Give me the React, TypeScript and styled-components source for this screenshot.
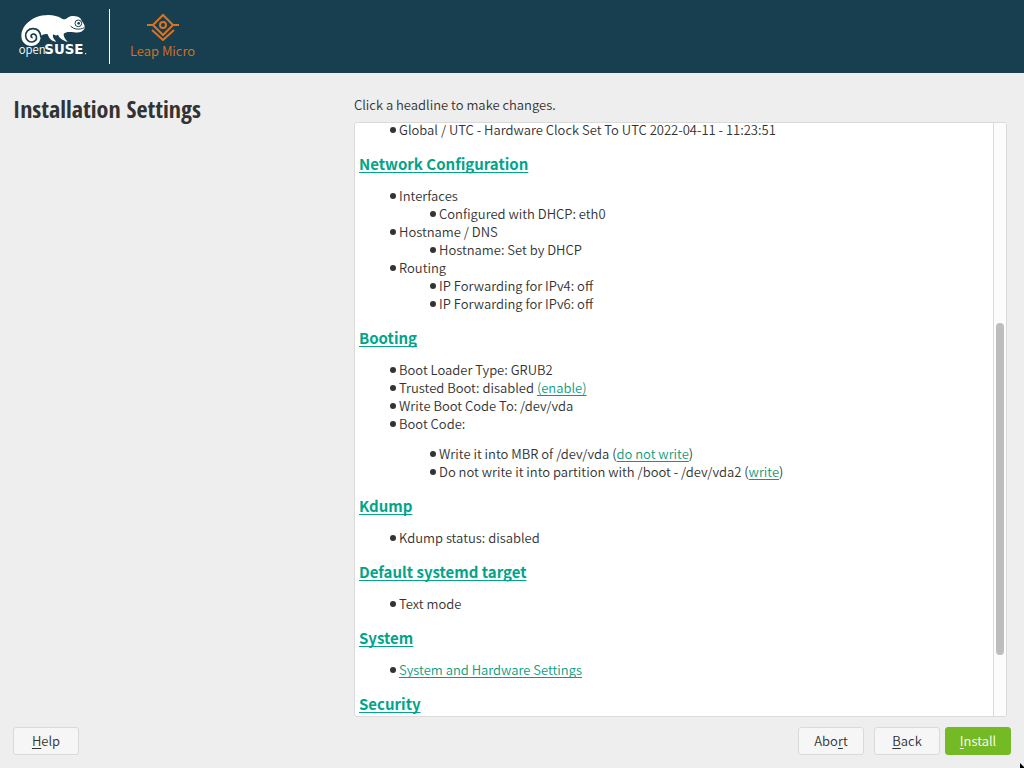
import React from "react";
import styled, { createGlobalStyle } from "styled-components";

const Global = createGlobalStyle`
  * { box-sizing: border-box; }
  body {
    margin: 0;
    background: #eeeeee;
    color: #333333;
    font-family: "Source Sans Pro", "Noto Sans CJK SC", sans-serif;
    font-size: 13px;
    font-weight: 350;
    line-height: 18px;
  }
`;

const Page = styled.div`
  display: flex;
  flex-direction: column;
  height: 100vh;
`;

const Header = styled.header`
  display: flex;
  align-items: flex-start;
  flex: none;
  gap: 20px;
  height: 73px;
  padding: 9px 18px;
  background: #173f4f;
`;

const SuseLogo = styled.svg`
  margin-top: 4px;
`;

const Divider = styled.div`
  width: 1px;
  height: 55px;
  background: #ffffff;
`;

const Product = styled.div`
  display: flex;
  flex-direction: column;
  align-items: center;
  gap: 1px;
  padding-top: 4px;
  color: #dd7220;
`;

const Main = styled.main`
  display: flex;
  flex: 1;
  min-height: 0;
  padding: 23px 17px 10px 13px;
`;

const Side = styled.div`
  flex: none;
  width: 341px;
`;

const Title = styled.h1`
  margin: 0;
  font-family: "Open Sans Condensed", "Noto Sans Condensed", "Roboto Condensed", "Liberation Sans Narrow", sans-serif;
  font-size: 24px;
  font-weight: 700;
  line-height: 26px;
`;

const Proposal = styled.section`
  display: flex;
  flex-direction: column;
  flex: 1;
  min-width: 0;
`;

const Hint = styled.p`
  margin: 0 0 8px;
`;

const Panel = styled.div`
  display: flex;
  flex: 1;
  min-height: 0;
  overflow: hidden;
  background: #ffffff;
  border: 1px solid #dadada;
  border-radius: 3px;
`;

const Track = styled.div`
  width: 13px;
  padding: 200px 2px 61px;
  background: #fcfcfc;
  border-left: 1px solid #dadada;
`;

const Thumb = styled.div`
  height: 100%;
  width: 8px;
  background: #bdbdbd;
  border-radius: 4px;
`;

const Link = styled.a`
  color: #0b9c7e;
  text-decoration: underline;
  text-decoration-thickness: 1px;
  text-underline-offset: 2px;
  text-decoration-skip-ink: none;
`;

const Heading = styled.h2`
  margin: 13px 0 11px;
  font-size: 15px;
  font-weight: 700;
  line-height: 24px;

  ${Link} {
    color: #02a489;
  }
`;

const List = styled.ul<{ $spaced?: boolean }>`
  margin: ${(p) => (p.$spaced ? "12px" : "0")} 0 0;
  padding: 0 0 0 40px;
  list-style: none;
`;

const Content = styled.div`
  flex: 1;
  min-width: 0;
  padding: 0 4px;

  > ${List}:first-child {
    margin-bottom: 15px;
    line-height: 14px;
  }
`;

const Item = styled.li`
  &::before {
    content: "";
    display: inline-block;
    width: 6px;
    height: 6px;
    margin: 0 3px 2px -9px;
    border-radius: 50%;
    background: #333333;
  }
`;

const Footer = styled.footer`
  display: flex;
  flex: none;
  gap: 10px;
  padding: 0 13px 13px;
`;

const Button = styled.button<{ $primary?: boolean }>`
  width: 66px;
  height: 28px;
  padding: 0;
  margin-left: ${(p) => (p.$primary ? "-5px" : "0")};
  font: inherit;
  color: ${(p) => (p.$primary ? "#ffffff" : "#333333")};
  background: ${(p) => (p.$primary ? "#73ba25" : "#f6f6f6")};
  border: 1px solid ${(p) => (p.$primary ? "#73ba25" : "#dadada")};
  border-radius: 3px;
`;

const Spacer = styled.div`
  flex: 1;
`;

const Key = styled.span`
  text-decoration: underline;
  text-decoration-thickness: 1px;
  text-underline-offset: 2px;
  text-decoration-skip-ink: none;
`;

const Pointer = styled.svg`
  position: fixed;
  right: 0;
  bottom: 0;
`;

const Section = ({ title, children }: { title: string; children?: React.ReactNode }) => (
  <>
    <Heading>
      <Link href="#">{title}</Link>
    </Heading>
    {children && <List>{children}</List>}
  </>
);

export default function App() {
  return (
    <Page>
      <Global />
      <Header>
        <SuseLogo width="71" height="46" viewBox="54 39 213 138" role="img" aria-label="openSUSE">
          <path
            fill="#fff"
            d="M64 108C64 84 82 64 108 52C132 42 166 42 186 56C192 60 198 58 205 52C214 46 232 47 241 55L246 64C252 72 255 78 254 84C250 96 236 99 222 97C208 95 198 95 191 101C190 110 195 116 203 125C190 123 178 114 174 104C169 107 166 107 160 103C156 111 162 118 169 125C156 125 147 116 143 103C136 101 128 104 122 109C122 127 110 138 94 138C76 138 64 125 64 108Z"
          />
          <path
            fill="none"
            stroke="#173f4f"
            strokeWidth="5"
            d="M123 112C121 94 111 86 99 86C85 86 76 96 77 108C78 120 87 127 97 126C107 125 111 117 109 109C107 102 99 100 95 104C91 108 94 113 98 112"
          />
          <circle cx="235" cy="70" r="10" fill="none" stroke="#173f4f" strokeWidth="3" />
          <circle cx="236" cy="70" r="4" fill="#173f4f" />
          <path fill="none" stroke="#173f4f" strokeWidth="3" d="M212 78C222 89 238 90 253 83" />
          <text x="56" y="163" fill="#fff" fontFamily="Noto Sans CJK SC" fontSize="34">
            open
          </text>
          <text x="133" y="163" fill="#fff" fontFamily="DejaVu Sans" fontWeight="700" fontSize="40">
            SUSE
          </text>
          <circle cx="257" cy="161" r="2" fill="#fff" />
        </SuseLogo>
        <Divider />
        <Product>
          <svg width="34" height="28" viewBox="0 0 34 28" fill="none" stroke="#dd7220" strokeWidth="2">
            <path d="M1 12H7L17 2L27 12H33M7 12L17 22L27 12M6 17L17 27L28 17" />
            <circle cx="17" cy="12" r="3" />
          </svg>
          Leap Micro
        </Product>
      </Header>
      <Main>
        <Side>
          <Title>Installation Settings</Title>
        </Side>
        <Proposal>
          <Hint>Click a headline to make changes.</Hint>
          <Panel>
            <Content>
              <List>
                <Item>Global / UTC - Hardware Clock Set To UTC 2022-04-11 - 11:23:51</Item>
              </List>
              <Section title="Network Configuration">
                <Item>
                  Interfaces
                  <List>
                    <Item>Configured with DHCP: eth0</Item>
                  </List>
                </Item>
                <Item>
                  Hostname / DNS
                  <List>
                    <Item>Hostname: Set by DHCP</Item>
                  </List>
                </Item>
                <Item>
                  Routing
                  <List>
                    <Item>IP Forwarding for IPv4: off</Item>
                    <Item>IP Forwarding for IPv6: off</Item>
                  </List>
                </Item>
              </Section>
              <Section title="Booting">
                <Item>Boot Loader Type: GRUB2</Item>
                <Item>
                  Trusted Boot: disabled <Link href="#">(enable)</Link>
                </Item>
                <Item>Write Boot Code To: /dev/vda</Item>
                <Item>
                  Boot Code:
                  <List $spaced>
                    <Item>
                      Write it into MBR of /dev/vda (<Link href="#">do not write</Link>)
                    </Item>
                    <Item>
                      Do not write it into partition with /boot - /dev/vda2 (<Link href="#">write</Link>)
                    </Item>
                  </List>
                </Item>
              </Section>
              <Section title="Kdump">
                <Item>Kdump status: disabled</Item>
              </Section>
              <Section title="Default systemd target">
                <Item>Text mode</Item>
              </Section>
              <Section title="System">
                <Item>
                  <Link href="#">System and Hardware Settings</Link>
                </Item>
              </Section>
              <Section title="Security" />
            </Content>
            <Track>
              <Thumb />
            </Track>
          </Panel>
        </Proposal>
      </Main>
      <Footer>
        <Button type="button"><Key>H</Key>elp</Button>
        <Spacer />
        <Button type="button">Abo<Key>r</Key>t</Button>
        <Button type="button"><Key>B</Key>ack</Button>
        <Button type="button" $primary><Key>I</Key>nstall</Button>
      </Footer>
      <Pointer width="4" height="5" viewBox="0 0 4 5" aria-hidden="true">
        <path d="M0 0L4 4V5H0Z" fill="#000" />
      </Pointer>
    </Page>
  );
}
